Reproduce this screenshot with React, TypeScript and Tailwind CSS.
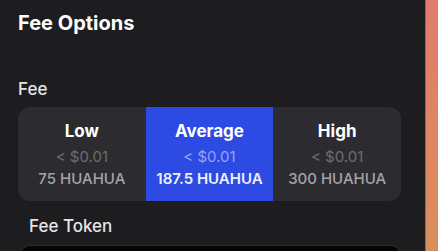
// fee options panel with the low / average / high selector
import { useState } from "react";

type FeeTier = { label: string; usd: string; amount: string };

const TIERS: FeeTier[] = [
  { label: "Low", usd: "< $0.01", amount: "75 HUAHUA" },
  { label: "Average", usd: "< $0.01", amount: "187.5 HUAHUA" },
  { label: "High", usd: "< $0.01", amount: "300 HUAHUA" },
];

export default function App() {
  const [selected, setSelected] = useState(1); // average is picked by default

  return (
    <div
      className="flex h-[251px] w-[438px] overflow-hidden bg-[#1d1d1f] text-white"
      style={{ fontFamily: "Inter, 'Noto Sans', sans-serif" }}
    >
      <div className="flex flex-1 flex-col pl-[18px] pr-[24px]">
        <h2 className="shrink-0 pt-[10px] text-[20px] font-bold leading-[26px]">Fee Options</h2>

        <p className="mt-[41px] shrink-0 text-[17px] font-medium leading-[24px] text-[#e4e4e7]">Fee</p>

        <div className="mt-[6px] grid h-[94px] shrink-0 grid-cols-3 overflow-hidden rounded-[12px] bg-[#2c2c30]">
          {TIERS.map((tier, i) => {
            const active = i === selected;
            return (
              <button
                key={tier.label}
                onClick={() => setSelected(i)}
                className={
                  active
                    ? "flex h-[94px] flex-col items-center bg-[#2d4be2] pt-[12px]"
                    : "flex h-[94px] flex-col items-center pt-[12px]"
                }
              >
                <span className="text-[17px] font-bold leading-[24px] text-white">{tier.label}</span>
                <span
                  className={
                    active
                      ? "mt-[4px] text-[15px] leading-[20px] text-[#94a3f4]"
                      : "mt-[4px] text-[15px] leading-[20px] text-[#6c6c72]"
                  }
                >
                  {tier.usd}
                </span>
                <span
                  className={
                    active
                      ? "mt-[2px] text-[15px] font-semibold leading-[20px] text-[#eef0ff]"
                      : "mt-[2px] text-[15px] font-medium leading-[20px] text-[#a3a3a8]"
                  }
                >
                  {tier.amount}
                </span>
              </button>
            );
          })}
        </div>

        <p className="mt-[13px] shrink-0 pl-[11px] text-[17px] font-medium leading-[24px] text-[#e4e4e7]">Fee Token</p>

        {/* token picker, only its top edge is visible */}
        <div className="ml-[2px] mt-[7px] h-[40px] shrink-0 rounded-[10px] border border-[#2e2e32] bg-[#050505]" />
      </div>

      <div className="w-[13px] border-l border-[#8a6a60] bg-gradient-to-b from-[#e07c6c] to-[#db8e5c]" />
    </div>
  );
}
